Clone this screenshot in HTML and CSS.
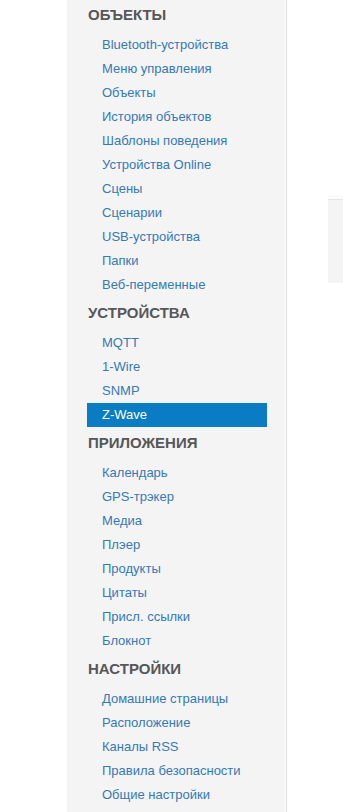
FILE: index.html
```
<!DOCTYPE html>
<html lang="ru">
<head>
    <meta charset="UTF-8">
    <meta name="viewport" content="width=device-width, initial-scale=1.0">
    <title>Панель управления</title>
    <link rel="stylesheet" href="styles.css">
</head>
<body>
    <div class="page">
        <div class="gutter"></div>

        <div class="sidebar">
            <ul class="nav-list">
                <li class="nav-header">Объекты</li>
                <li><a href="#">Bluetooth-устройства</a></li>
                <li><a href="#">Меню управления</a></li>
                <li><a href="#">Объекты</a></li>
                <li><a href="#">История объектов</a></li>
                <li><a href="#">Шаблоны поведения</a></li>
                <li><a href="#">Устройства Online</a></li>
                <li><a href="#">Сцены</a></li>
                <li><a href="#">Сценарии</a></li>
                <li><a href="#">USB-устройства</a></li>
                <li><a href="#">Папки</a></li>
                <li><a href="#">Веб-переменные</a></li>

                <li class="nav-header">Устройства</li>
                <li><a href="#">MQTT</a></li>
                <li><a href="#">1-Wire</a></li>
                <li><a href="#">SNMP</a></li>
                <li class="active"><a href="#">Z-Wave</a></li>

                <li class="nav-header">Приложения</li>
                <li><a href="#">Календарь</a></li>
                <li><a href="#">GPS-трэкер</a></li>
                <li><a href="#">Медиа</a></li>
                <li><a href="#">Плэер</a></li>
                <li><a href="#">Продукты</a></li>
                <li><a href="#">Цитаты</a></li>
                <li><a href="#">Присл. ссылки</a></li>
                <li><a href="#">Блокнот</a></li>

                <li class="nav-header">Настройки</li>
                <li><a href="#">Домашние страницы</a></li>
                <li><a href="#">Расположение</a></li>
                <li><a href="#">Каналы RSS</a></li>
                <li><a href="#">Правила безопасности</a></li>
                <li><a href="#">Общие настройки</a></li>
            </ul>
        </div>

        <div class="content">
            <div class="well"></div>
        </div>
    </div>
</body>
</html>
```

FILE: styles.css
```
* {
    margin: 0;
    padding: 0;
    box-sizing: border-box;
}

body {
    font-family: 'Liberation Sans', Arial, sans-serif;
    background: white;
    height: 812px;
    overflow: hidden;
}

.page {
    display: flex;
    min-height: 812px;
}

.gutter {
    width: 67px;
    flex-shrink: 0;
}

.sidebar {
    width: 220px;
    flex-shrink: 0;
    background: #f4f4f4;
    border-right: 1px solid #e2e2e2;
    box-shadow: inset -2px 0 0 #f9f9f9;
    padding: 0 19px 0 20px;
}

.nav-list {
    list-style: none;
    margin-top: -1px;
}

.nav-header {
    padding: 6px 0 8px 1px;
    line-height: 20px;
    font-size: 15px;
    font-weight: bold;
    text-transform: uppercase;
    color: #575757;
}

.nav-list a {
    display: block;
    padding: 0 15px;
    line-height: 24px;
    font-size: 13px;
    color: #3479b8;
    text-decoration: none;
}

.nav-list .active a {
    background: #0a7cc4;
    color: white;
}

.content {
    flex: 1;
    padding: 195px 0 0 41px;
}

.well {
    height: 88px;
    background: #f4f4f4;
    border-top: 4px solid #fbfbfb;
    box-shadow: inset 0 1px 0 #e6e6e6;
}
```
